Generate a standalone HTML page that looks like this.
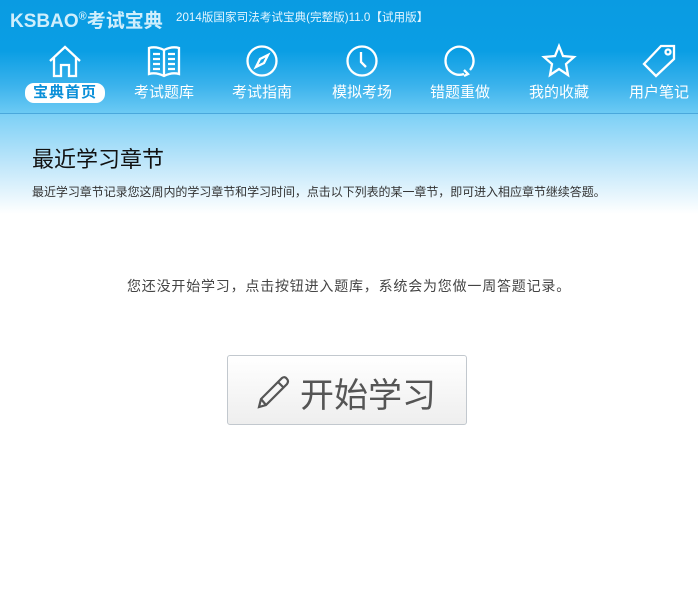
<!DOCTYPE html>
<html><head><meta charset="utf-8"><style>
body{margin:0;width:698px;height:601px;overflow:hidden;background:#fff;font-family:"Liberation Sans","Noto Sans CJK SC",sans-serif;position:relative}
.hdr{position:absolute;left:0;top:0;width:698px;height:113px;background:linear-gradient(#0a9be2 0%,#0a9ee4 45%,#3ab2ec 75%,#6ccaf4 100%)}
.line{position:absolute;left:0;top:113px;width:698px;height:1px;background:#4aa8dc}
.sub{position:absolute;left:0;top:114px;width:698px;height:100px;background:linear-gradient(#7cd0f6,#bfe6fa 50%,#fff)}
.logo{position:absolute;left:10px;top:6px;color:#cfeefc;font-weight:bold;font-size:19px}
.ttl{position:absolute;left:176px;top:9px;color:#e6f6ff;font-size:11.6px}
.nav{position:absolute;top:43px;width:98px;text-align:center;color:#fff;font-size:15px}
.nav svg{display:block;margin:0 auto;width:36px;height:36px}
.nav span{display:inline-block;margin-top:4px;padding:0 8px;line-height:20px}
.act span{background:#fff;color:#0a8fd8;border-radius:9px;font-weight:bold;letter-spacing:1px}
h1{position:absolute;left:32px;top:142px;margin:0;font-size:22px;font-weight:normal;color:#111}
.desc{position:absolute;left:32px;top:183px;font-size:12px;color:#333;letter-spacing:-0.05px}
.msg{position:absolute;left:0;width:698px;top:276px;text-align:center;font-size:14px;color:#444;letter-spacing:0.8px}
.btn{position:absolute;left:227px;top:355px;width:240px;height:70px;border:1px solid #c2c8ce;border-radius:3px;background:linear-gradient(#fff,#eee);box-sizing:border-box;color:#555;font-size:34px}
.btn svg{position:absolute;left:28px;top:18px}
.btn span{position:absolute;left:72px;top:12px}
</style></head><body>
<div class="hdr"></div><div class="line"></div><div class="sub"></div>
<div class="logo">KSBAO<sup style="font-size:11px">®</sup>考试宝典</div>
<div class="ttl">2014版国家司法考试宝典(完整版)11.0【试用版】</div>
<div class="nav act" style="left:16px"><svg viewBox="0 0 36 36" fill="none" stroke="#fff" stroke-width="2.3"><path d="M3 18L18 4L33 18M7 15V33H14V22H22V33H29V15"/></svg><span>宝典首页</span></div>
<div class="nav" style="left:115px"><svg viewBox="0 0 36 36" fill="none" stroke="#fff" stroke-width="2.3"><path d="M3 5Q10 3 18 7Q26 3 33 5V31Q26 29 18 33Q10 29 3 31Z M18 7V33 M7 11H14M7 16H14M7 21H14M7 26H14M22 11H29M22 16H29M22 21H29M22 26H29"/></svg><span>考试题库</span></div>
<div class="nav" style="left:213px"><svg viewBox="0 0 36 36" fill="none" stroke="#fff" stroke-width="2.3"><circle cx="18" cy="18" r="14.5"/><path d="M24 12L20 20L12 24L16 16Z"/></svg><span>考试指南</span></div>
<div class="nav" style="left:313px"><svg viewBox="0 0 36 36" fill="none" stroke="#fff" stroke-width="2.3"><circle cx="18" cy="18" r="14.5"/><path d="M17 9V19L22 24"/></svg><span>模拟考场</span></div>
<div class="nav" style="left:411px"><svg viewBox="0 0 36 36" fill="none" stroke="#fff" stroke-width="2.3"><path d="M22 31A14 14 0 1 1 28 27M22 27L26 31L22 33"/></svg><span>错题重做</span></div>
<div class="nav" style="left:510px"><svg viewBox="0 0 36 36" fill="none" stroke="#fff" stroke-width="2.3"><path d="M18 3L22 13L33 14L25 21L27 32L18 26L9 32L11 21L3 14L14 13Z"/></svg><span>我的收藏</span></div>
<div class="nav" style="left:610px"><svg viewBox="0 0 36 36" fill="none" stroke="#fff" stroke-width="2.3"><path d="M20 3H33V16L15 33L3 21Z"/><circle cx="27" cy="9" r="2.5"/></svg><span>用户笔记</span></div>
<h1>最近学习章节</h1>
<div class="desc">最近学习章节记录您这周内的学习章节和学习时间，点击以下列表的某一章节，即可进入相应章节继续答题。</div>
<div class="msg">您还没开始学习，点击按钮进入题库，系统会为您做一周答题记录。</div>
<div class="btn"><svg width="36" height="36" viewBox="0 0 36 36" fill="none" stroke="#555" stroke-width="2.2"><path d="M3 33L5 25L26 4Q29 2 31 5Q33 7 31 10L10 31Z M22 8L28 14 M5 25L10 31"/></svg><span>开始学习</span></div>
</body></html>
